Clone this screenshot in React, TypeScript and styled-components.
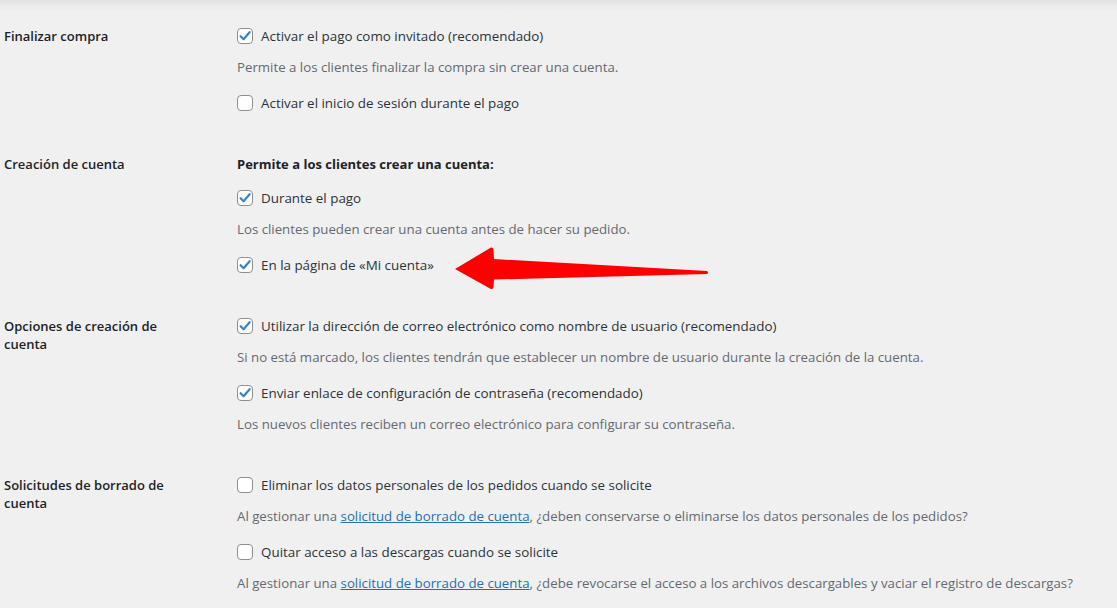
import React from "react";
import styled, {createGlobalStyle} from "styled-components";

const GlobalStyle = createGlobalStyle`
    html, body {
        margin: 0;
        padding: 0;
        background: #f0f0f1;
    }
    body {
        font-family: "Open Sans", "Noto Sans", sans-serif;
        color: #1d2327;
        font-size: 13px;
    }
`;

const Page = styled.div`
    position: relative;
    width: 1117px;
    height: 608px;
    overflow: hidden;
    background: linear-gradient(#e1e1e3 0px, #ececed 6px, #f0f0f1 12px);
    padding-top: 26px;
    box-sizing: border-box;
`;

const Row = styled.div`
    display: grid;
    grid-template-columns: 237px 1fr;
    padding-bottom: 41px;
`;

const Label = styled.div`
    padding: 1px 0 0 4px;
    width: 170px;
    font-weight: 600;
    font-size: 13px;
    line-height: 18px;
    color: #1d2327;
`;

const Field = styled.div`
    display: flex;
    flex-direction: column;
`;

const Heading = styled.div`
    font-weight: 700;
    line-height: 20px;
    margin-bottom: 14px;
`;

const CheckRow = styled.label<{ $after?: number }>`
    display: flex;
    align-items: center;
    gap: 8px;
    height: 20px;
    font-size: 13.4px;
    color: #2c3338;
    margin-bottom: ${p => p.$after ?? 0}px;
`;

const Box = styled.span`
    width: 16px;
    height: 16px;
    box-sizing: border-box;
    border: 1px solid #8c8f94;
    border-radius: 4px;
    background: #fff;
    display: flex;
    align-items: center;
    justify-content: center;
    flex-shrink: 0;
`;

const Description = styled.p<{ $after?: number }>`
    margin: 11px 0 ${p => p.$after ?? 0}px;
    font-size: 13.25px;
    line-height: 20px;
    color: #646970;
`;

const DocLink = styled.a`
    color: #2271b1;
    text-decoration: underline;
`;

const Arrow = styled.svg`
    position: absolute;
    left: 450px;
    top: 243px;
`;

const Check = ({on}: { on?: boolean }) => (
    <Box>
        {on && (
            <svg width="14" height="14" viewBox="0 0 14 14">
                <path d="M2.6 7.2 L5.6 10.2 L11.6 3.2" fill="none" stroke="#3582c4" strokeWidth="2.2"
                      strokeLinecap="round" strokeLinejoin="round"/>
            </svg>
        )}
    </Box>
);

const Option = ({on, children, after}: { on?: boolean; children: React.ReactNode; after?: number }) => (
    <CheckRow $after={after}>
        <Check on={on}/>
        <span>{children}</span>
    </CheckRow>
);

export default function App() {
    return (
        <>
            <GlobalStyle/>
            <Page>
                <Row>
                    <Label>Finalizar compra</Label>
                    <Field>
                        <Option on>Activar el pago como invitado (recomendado)</Option>
                        <Description $after={16}>Permite a los clientes finalizar la compra sin crear una cuenta.</Description>
                        <Option>Activar el inicio de sesión durante el pago</Option>
                    </Field>
                </Row>
                <Row>
                    <Label>Creación de cuenta</Label>
                    <Field>
                        <Heading>Permite a los clientes crear una cuenta:</Heading>
                        <Option on>Durante el pago</Option>
                        <Description $after={16}>Los clientes pueden crear una cuenta antes de hacer su pedido.</Description>
                        <Option on>En la página de «Mi cuenta»</Option>
                    </Field>
                </Row>
                <Row>
                    <Label>Opciones de creación de cuenta</Label>
                    <Field>
                        <Option on>Utilizar la dirección de correo electrónico como nombre de usuario (recomendado)</Option>
                        <Description $after={16}>Si no está marcado, los clientes tendrán que establecer un nombre de usuario durante la creación de la cuenta.</Description>
                        <Option on>Enviar enlace de configuración de contraseña (recomendado)</Option>
                        <Description>Los nuevos clientes reciben un correo electrónico para configurar su contraseña.</Description>
                    </Field>
                </Row>
                <Row>
                    <Label>Solicitudes de borrado de cuenta</Label>
                    <Field>
                        <Option>Eliminar los datos personales de los pedidos cuando se solicite</Option>
                        <Description $after={16}>
                            Al gestionar una <DocLink href="#">solicitud de borrado de cuenta</DocLink>, ¿deben conservarse o eliminarse los datos personales de los pedidos?
                        </Description>
                        <Option>Quitar acceso a las descargas cuando se solicite</Option>
                        <Description>
                            Al gestionar una <DocLink href="#">solicitud de borrado de cuenta</DocLink>, ¿debe revocarse el acceso a los archivos descargables y vaciar el registro de descargas?
                        </Description>
                    </Field>
                </Row>
                <Arrow width="265" height="50" viewBox="450 243 265 50">
                    <path d="M455 269 L491 247.5 Q493.5 247 493.5 250 L494 259 L707 271 Q709 272.5 707 274 L494 279.5 L493.5 287 Q493 290 490 288.5 Z"
                          fill="#ff0000"/>
                </Arrow>
            </Page>
        </>
    );
}
